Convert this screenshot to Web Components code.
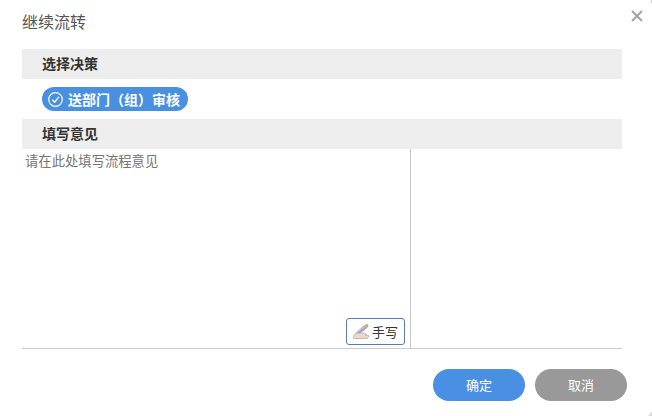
<!DOCTYPE html>
<html lang="zh"><head><meta charset="utf-8">
<style>
html,body{margin:0;padding:0;background:#fff}
body{width:652px;height:416px;overflow:hidden;font-family:"Noto Sans CJK SC","Liberation Sans",sans-serif}
</style></head><body>
<flow-dialog heading="继续流转">
  <section-bar>选择决策</section-bar>
  <decision-row><decision-pill>送部门（组）审核</decision-pill></decision-row>
  <section-bar>填写意见</section-bar>
  <opinion-box placeholder="请在此处填写流程意见"></opinion-box>
  <div slot="actions" style="display:flex;gap:10px">
    <action-button kind="primary">确定</action-button>
    <action-button>取消</action-button>
  </div>
</flow-dialog>
<script>
function def(name, html, init){
  customElements.define(name, class extends HTMLElement{
    constructor(){super();const r=this.attachShadow({mode:'open'});r.innerHTML=html;}
    connectedCallback(){init&&init(this,this.shadowRoot);}
  });
}
def('flow-dialog',`<style>
:host{display:flex;flex-direction:column;width:652px;height:416px;box-sizing:border-box;background:#fff;position:relative;color:#333}
header{height:49px;box-sizing:border-box;padding:10px 22px 0;font-size:16px;line-height:22px;color:#555}
main{margin:0 30px 0 22px;display:flex;flex-direction:column}
footer{display:flex;justify-content:flex-end;padding:20px 25px 0 0}
svg{position:absolute}
.x{left:631px;top:10px}
.c1{right:0;top:0}.c2{right:0;bottom:0}
</style><header id="h"></header>
<svg class="x" width="12" height="12" viewBox="0 0 12 12"><path d="M1 1L11 11M11 1L1 11" stroke="#a3a3a3" stroke-width="2" fill="none"/></svg>
<svg class="c1" width="1" height="3"><rect width="1" height="3" fill="#ccc"/></svg>
<svg class="c2" width="4" height="5"><path d="M4 0V5H0Z" fill="#ddd"/></svg>
<main><slot></slot></main><footer><slot name="actions"></slot></footer>`,(e,r)=>{r.getElementById('h').textContent=e.getAttribute('heading')});
def('section-bar',`<style>:host{display:block;height:30px;line-height:29px;background:#eee;padding-left:20px;font-size:14px;font-weight:700;color:#333}</style><slot></slot>`);
def('decision-row',`<style>:host{display:flex;height:40px;align-items:center;padding-left:20px}</style><slot></slot>`);
def('decision-pill',`<style>:host{display:inline-flex;align-items:center;height:24px;background:#4a90e2;border-radius:12px;color:#fff;font-size:14px;font-weight:700;padding:0 8px 0 6px;gap:5px;line-height:23px;white-space:nowrap}svg{display:block;flex:none}</style>
<svg width="15" height="15" viewBox="0 0 15 15"><circle cx="7.5" cy="7.5" r="6.8" fill="none" stroke="#fff" stroke-width="1.2"/><path d="M4.2 7.8L6.6 10.2L10.9 4.9" fill="none" stroke="#fff" stroke-width="1.3"/></svg><slot></slot>`);
def('opinion-box',`<style>
:host{display:grid;grid-template-columns:389px 1fr;height:200px;box-sizing:border-box;border-bottom:1px solid #ccc}
.l{border-right:1px solid #c8c8c8;display:flex;flex-direction:column;justify-content:space-between;padding:3px 0 3px 3px;min-width:0;box-sizing:border-box}
.p{font-size:13.33px;line-height:18px;color:#757575}
.b{align-self:flex-end;margin-right:5px;width:59px;height:27px;box-sizing:border-box;border:1px solid #5a7db5;border-radius:3px;display:flex;align-items:center;gap:2px;padding-left:5px;font-size:13px;color:#333;background:#fff}
svg{flex:none;display:block}
</style><div class="l"><div class="p" id="p"></div>
<div class="b"><svg width="18" height="17" viewBox="0 0 18 17"><path d="M1 14.5L3.5 10.5L8 9.5L13.5 10.5C15 11 14.5 12 13 12.2L16.5 12.5C17.5 13.5 16 15.5 14 15.5H3C1.5 15.5 .6 15.2 1 14.5Z" fill="#ecd9cd" stroke="#bda8a8" stroke-width=".8"/><path d="M3 10.5L12 2.5L15 5L8 10.5L5 10Z" fill="#a7a0bd"/><path d="M5 9.5L13 3.5" stroke="#d8d3df" stroke-width=".8"/><path d="M12 2.5L15.5 .8L16.5 3.2L15 5Z" fill="#cda95f"/></svg><span>手写</span></div></div><div></div>`,(e,r)=>{r.getElementById('p').textContent=e.getAttribute('placeholder')});
def('action-button',`<style>:host{display:flex;width:92px;height:32px;border-radius:16px;align-items:center;justify-content:center;color:#fff;font-size:13px;font-weight:400;background:#999;line-height:30px}
:host([kind=primary]){background:#4a90e2}</style><slot></slot>`);
</script>
</body></html>
